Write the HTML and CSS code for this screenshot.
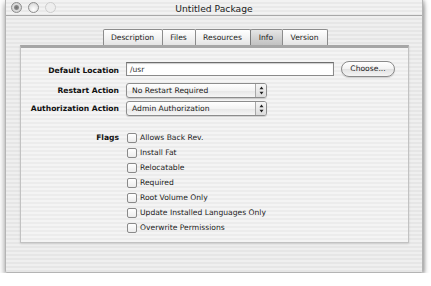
FILE: index.html
```html
<!DOCTYPE html>
<html>
<head>
<meta charset="utf-8">
<link rel="stylesheet" href="styles.css">
</head>
<body>
<div class="window">
  <div class="titlebar">
    <div class="lights">
      <span class="light close"></span>
      <span class="light"></span>
      <span class="light dim"></span>
    </div>
    <div class="title">Untitled Package</div>
  </div>
  <div class="content">
    <div class="tabs">
      <div class="tab">Description</div>
      <div class="tab">Files</div>
      <div class="tab">Resources</div>
      <div class="tab active">Info</div>
      <div class="tab">Version</div>
    </div>
    <div class="panel">
      <div class="form">
        <div class="label">Default Location</div>
        <div class="field-row">
          <div class="textfield">/usr</div>
          <div class="button">Choose...</div>
        </div>
        <div class="label">Restart Action</div>
        <div class="popup"><span class="ptext">No Restart Required</span><span class="stepper"><svg width="5" height="9" viewBox="0 0 5 9"><path d="M2.5 0.5 L4.5 3.3 L0.5 3.3 Z M2.5 8.5 L4.5 5.7 L0.5 5.7 Z" fill="#222"/></svg></span></div>
        <div class="label">Authorization Action</div>
        <div class="popup"><span class="ptext">Admin Authorization</span><span class="stepper"><svg width="5" height="9" viewBox="0 0 5 9"><path d="M2.5 0.5 L4.5 3.3 L0.5 3.3 Z M2.5 8.5 L4.5 5.7 L0.5 5.7 Z" fill="#222"/></svg></span></div>
        <div class="label flags-label">Flags</div>
        <div class="checks">
          <div class="check"><span class="box"></span>Allows Back Rev.</div>
          <div class="check"><span class="box"></span>Install Fat</div>
          <div class="check"><span class="box"></span>Relocatable</div>
          <div class="check"><span class="box"></span>Required</div>
          <div class="check"><span class="box"></span>Root Volume Only</div>
          <div class="check"><span class="box"></span>Update Installed Languages Only</div>
          <div class="check"><span class="box"></span>Overwrite Permissions</div>
        </div>
      </div>
    </div>
  </div>
</div>
</body>
</html>
```

FILE: styles.css
```css
html, body {
  margin: 0;
  padding: 0;
  background: #ffffff;
}
body {
  padding: 0 0 0 5px;
  font-family: "DejaVu Sans", "Liberation Sans", sans-serif;
  font-size: 7.6px;
  color: #111;
}
.window {
  width: 418px;
  height: 273px;
  box-sizing: border-box;
  background: repeating-linear-gradient(to bottom, #efefef 0px, #efefef 2px, #e6e6e6 2px, #e6e6e6 4px);
  border: 1px solid #b4b4b4;
  border-top: none;
  border-radius: 0 0 2px 2px;
  box-shadow: 0 3px 6px rgba(0,0,0,0.45), 2px 0 3px rgba(0,0,0,0.15);
  display: flex;
  flex-direction: column;
}
.titlebar {
  height: 15px;
  border-bottom: 1px solid #a8a8a8;
  position: relative;
  display: flex;
  align-items: center;
  justify-content: center;
  background: repeating-linear-gradient(to bottom, #f2f2f2 0px, #f2f2f2 2px, #e9e9e9 2px, #e9e9e9 4px);
}
.lights {
  position: absolute;
  left: 5px;
  top: 2px;
  display: flex;
  gap: 6px;
}
.light {
  width: 9px;
  height: 9px;
  border-radius: 50%;
  border: 1px solid #8e8e8e;
  background: radial-gradient(circle at 50% 70%, #ffffff 0%, #e4e4e4 60%, #c8c8c8 100%);
}
.light.close {
  background: radial-gradient(circle at 50% 50%, #6f6f6f 0%, #858585 30%, #dcdcdc 48%, #c4c4c4 100%);
}
.light.dim {
  border-color: #cdcdcd;
  background: #eeeeee;
}
.title {
  font-size: 9.2px;
  color: #222;
  margin-top: 1px;
}
.content {
  padding: 13px 13px 0 14px;
  display: flex;
  flex-direction: column;
}
.tabs {
  display: flex;
  justify-content: center;
  height: 16px;
  padding-left: 1px;
  position: relative;
  z-index: 1;
}
.tab {
  height: 16px;
  box-sizing: border-box;
  padding: 3px 0 0;
  border: 1px solid #8c8c8c;
  border-bottom: none;
  border-left: none;
  border-radius: 0 2px 0 0;
  background: linear-gradient(to bottom, #ffffff, #f0f0f0 60%, #e4e4e4);
  text-align: center;
  color: #222;
}
.tab:first-child { border-left: 1px solid #8c8c8c; border-radius: 2px 2px 0 0; width: 60px; }
.tab:nth-child(2) { width: 33px; }
.tab:nth-child(3) { width: 55px; }
.tab:nth-child(4) { width: 32px; }
.tab:nth-child(5) { width: 45px; }
.tab.active {
  background: linear-gradient(to bottom, #e6e6e6, #cfcfcf 60%, #c2c2c2);
  border-left: 1px solid #7c7c7c;
  border-radius: 2px 2px 0 0;
  margin-left: -1px;
  width: 33px;
}
.panel {
  height: 198px;
  box-sizing: border-box;
  border: 1px solid #c2c2c2;
  border-top: 3px solid #a6a6a6;
  background: repeating-linear-gradient(to bottom, #f4f4f4 0px, #f4f4f4 2px, #ececec 2px, #ececec 4px);
  box-shadow: 0 1px 2px rgba(0,0,0,0.12);
  padding-top: 13px;
}
.form {
  display: grid;
  grid-template-columns: 98px auto;
  column-gap: 7px;
  row-gap: 3px;
  align-items: center;
}
.label {
  text-align: right;
  font-weight: bold;
  color: #111;
  white-space: nowrap;
}
.field-row {
  display: flex;
  align-items: center;
  gap: 7px;
  margin-bottom: 3px;
}
.textfield {
  width: 208px;
  height: 14px;
  box-sizing: border-box;
  border: 1px solid #8a8a8a;
  border-top-color: #6e6e6e;
  background: #fff;
  box-shadow: inset 0 1px 1px rgba(0,0,0,0.2);
  padding: 1px 3px 0;
  color: #333;
  line-height: 11px;
}
.button {
  width: 54px;
  height: 16px;
  box-sizing: border-box;
  border: 1px solid #8a8a8a;
  border-radius: 8px;
  background: linear-gradient(to bottom, #ffffff, #f2f2f2 50%, #e2e2e2 51%, #f4f4f4);
  text-align: center;
  line-height: 14px;
  color: #222;
  box-shadow: 0 1px 1px rgba(0,0,0,0.15);
}
.popup {
  width: 141px;
  height: 15px;
  box-sizing: border-box;
  border: 1px solid #8c8c8c;
  border-radius: 3px;
  background: linear-gradient(to bottom, #ffffff, #f3f3f3 50%, #e6e6e6 51%, #f6f6f6);
  display: flex;
  align-items: center;
  box-shadow: 0 1px 1px rgba(0,0,0,0.15);
}
.ptext {
  flex: 1;
  padding-left: 5px;
  color: #222;
}
.stepper {
  width: 10px;
  height: 13px;
  border-left: 1px solid #a8a8a8;
  display: flex;
  align-items: center;
  justify-content: center;
  background: linear-gradient(to bottom, #f6f6f6, #dcdcdc);
  border-radius: 0 2px 2px 0;
}
.flags-label {
  align-self: start;
  margin-top: 11px;
  line-height: 15px;
}
.checks {
  margin-top: 11px;
  display: flex;
  flex-direction: column;
}
.check {
  height: 15px;
  display: flex;
  align-items: center;
  gap: 3px;
  color: #222;
}
.box {
  width: 8px;
  height: 8px;
  border: 1px solid #8a8a8a;
  border-radius: 2px;
  background: linear-gradient(to bottom, #ffffff, #ececec);
  margin-left: 1px;
}
```
